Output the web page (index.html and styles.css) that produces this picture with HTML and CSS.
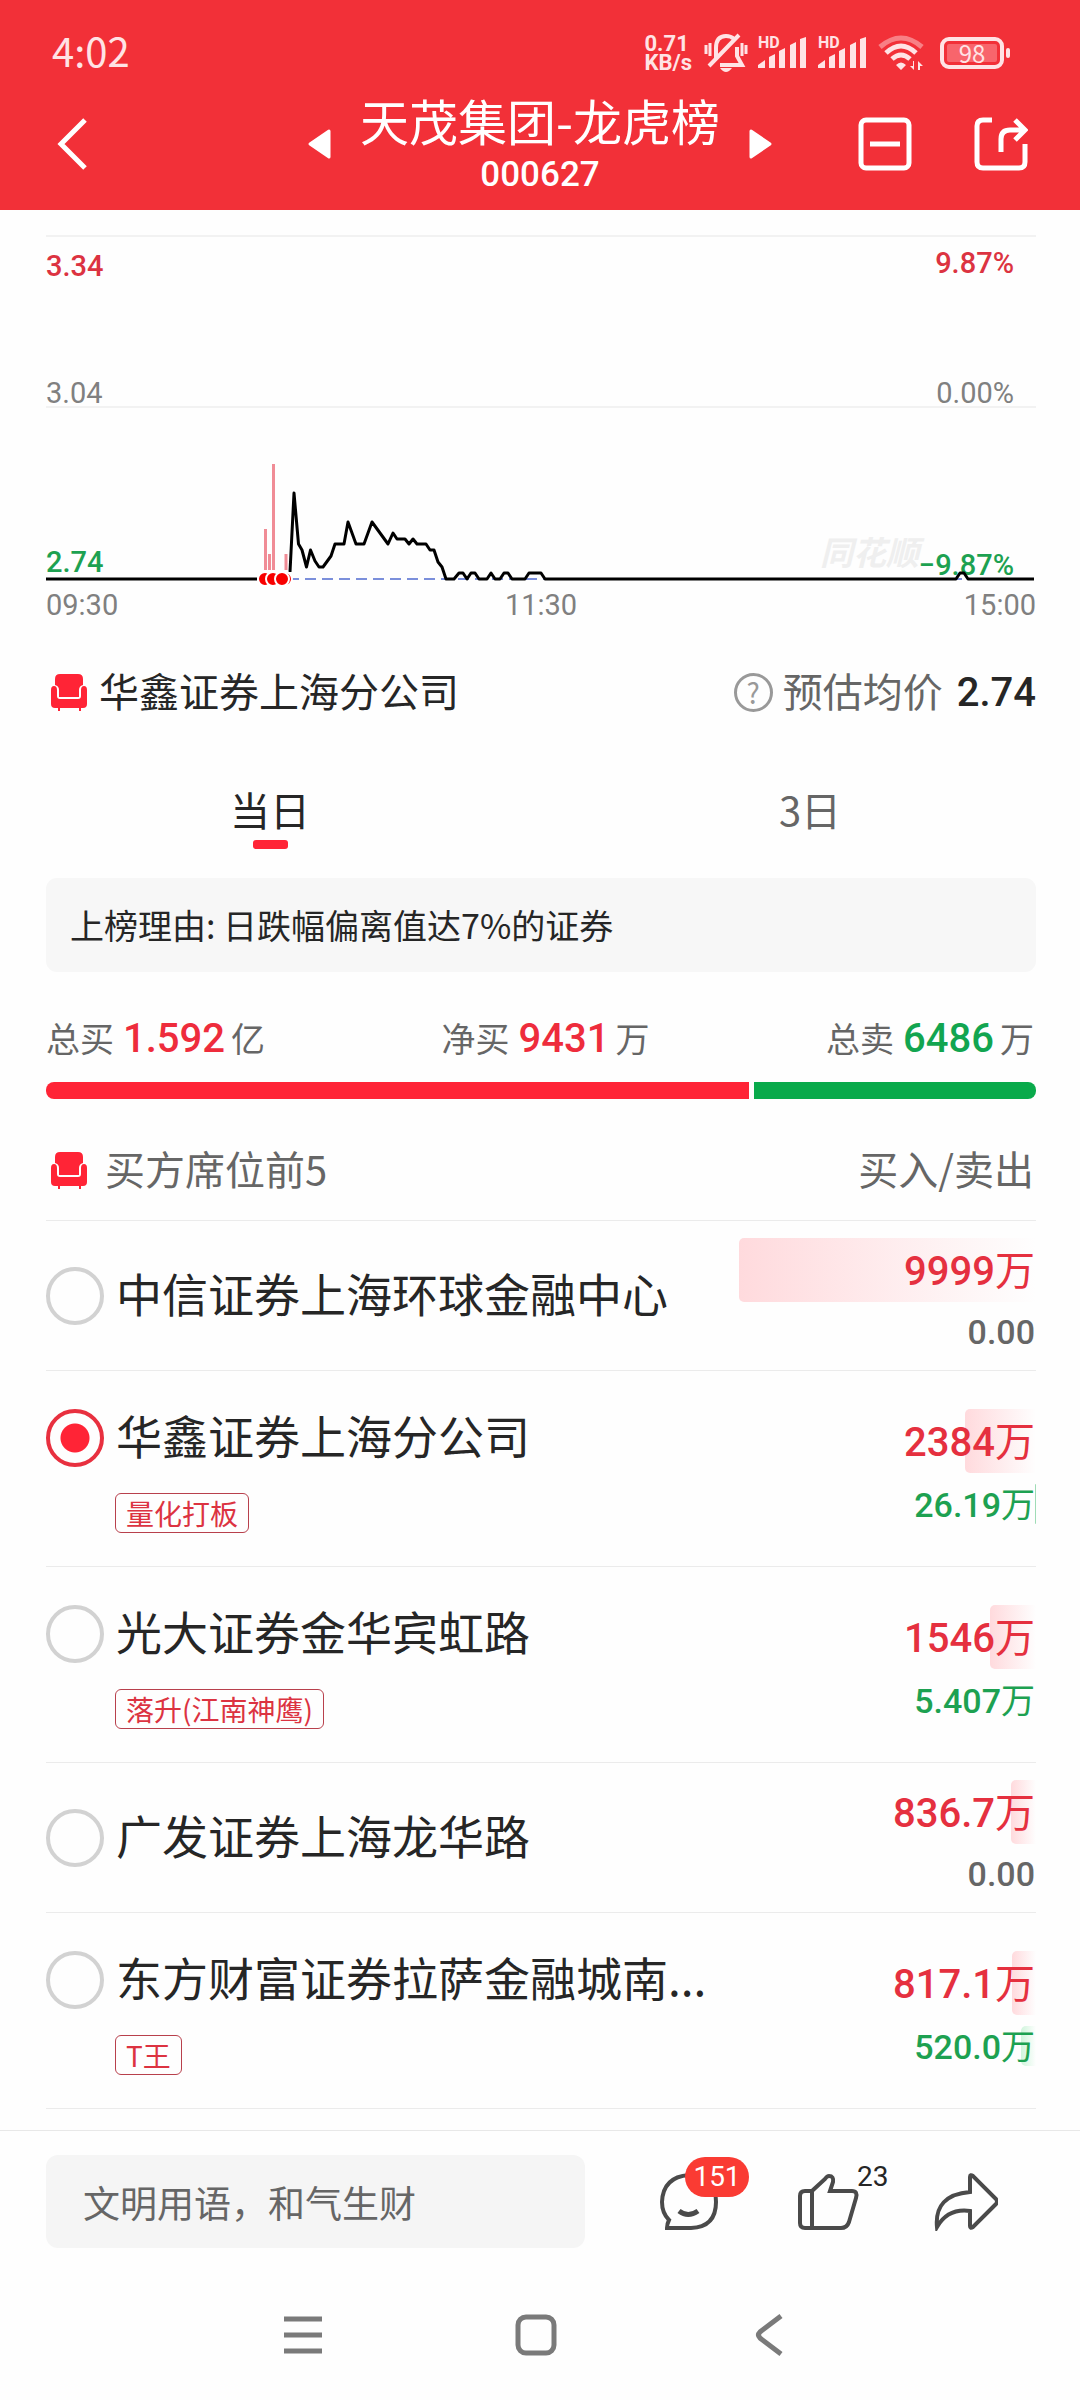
FILE: index.html
```html
<!DOCTYPE html>
<html lang="zh-CN">
<head>
  <meta charset="UTF-8">
  <meta name="viewport" content="width=device-width, initial-scale=1.0">
  <title>天茂集团-龙虎榜</title>
  <link rel="stylesheet" href="styles.css">
</head>
<body>

<!-- shared icons -->
<svg class="sprite" aria-hidden="true">
  <symbol id="icon-seat" viewBox="0 0 36 37">
    <path d="M9 0h18q5 0 5 5v6q-4 1-4 5v7H8v-7q0-4-4-5V5q0-5 5-5z"/>
    <path d="M3 12q3 0 3 4v6q0 3 3 3h18q3 0 3-3v-6q0-4 3-4t3 4v14q0 4-4 4h-2v3h-2v-3H9v3H7v-3H4q-4 0-4-4V16q0-4 3-4z"/>
  </symbol>
  <symbol id="icon-signal" viewBox="0 0 50 32">
    <path d="M0 31v-3l7-5v8zM11 31V20l6-3v14zM21 31V14l6-3v20zM32 31V8l6-3v26zM42 31V2l6-2v31z"/>
  </symbol>
</svg>

<header class="header">
  <div class="status">
    <span class="clock">4:02</span>
    <div class="status-icons">
      <span class="speed">0.71<br>KB/s</span>
      <svg class="bell" viewBox="0 0 44 40">
        <g fill="none" stroke="#ffe3e5" stroke-width="4">
          <path d="M12 25V15q0-12 10-12 5 0 8 3M33 14v9l5 9H16M5 33 35 2"/>
          <path d="M2 12v9M6 10v13M38 10v13M42 12v9" stroke-width="3"/>
        </g>
        <path d="M16 35h12q-6 8-12 0z" fill="#ffe3e5"/>
      </svg>
      <span class="signal"><b>HD</b><svg><use href="#icon-signal"/></svg></span>
      <span class="signal"><b>HD</b><svg><use href="#icon-signal"/></svg></span>
      <svg class="wifi" viewBox="0 0 47 36">
        <g fill="none" stroke="#ffe3e5" stroke-width="5">
          <path d="M2 12q21-18 42 0" opacity=".45"/>
          <path d="M8 18q15-14 30 0M14 24q9-8 18 0"/>
        </g>
        <path d="M18 30q5-5 10 0l-5 5zM36 26v9l-4-4h3v-5zM40 35v-9l5 5h-3v4z" fill="#ffe3e5"/>
      </svg>
      <span class="battery">98</span>
    </div>
  </div>

  <div class="titlebar">
    <button class="icon-btn" aria-label="返回">
      <svg width="40" height="54" viewBox="0 0 40 54"><path d="M33 3 9 27l24 24" fill="none" stroke="#fff" stroke-width="5"/></svg>
    </button>
    <div class="stock">
      <button class="icon-btn" aria-label="上一只">
        <svg width="24" height="30" viewBox="0 0 24 30"><path d="M21 2v26L2 15z" fill="#fff" stroke="#fff" stroke-width="3" stroke-linejoin="round"/></svg>
      </button>
      <div class="stock-name">
        <h1>天茂集团-龙虎榜</h1>
        <p>000627</p>
      </div>
      <button class="icon-btn" aria-label="下一只">
        <svg width="24" height="30" viewBox="0 0 24 30"><path d="M3 2v26l19-13z" fill="#fff" stroke="#fff" stroke-width="3" stroke-linejoin="round"/></svg>
      </button>
    </div>
    <div class="actions">
      <button class="icon-btn" aria-label="移除自选">
        <svg width="54" height="54" viewBox="0 0 54 54"><g fill="none" stroke="#fff" stroke-width="5"><rect x="3" y="3" width="48" height="48" rx="5"/><path d="M12 27h30"/></g></svg>
      </button>
      <button class="icon-btn" aria-label="分享">
        <svg width="54" height="54" viewBox="0 0 54 54"><path d="M18 3H9q-6 0-6 6v36q0 6 6 6h36q6 0 6-6V27M27 35V22q0-9 9-9h13M41 3l10 10-10 10" fill="none" stroke="#fff" stroke-width="5"/></svg>
      </button>
    </div>
  </div>
</header>

<main class="content">
  <svg class="chart" viewBox="0 0 990 410" role="img" aria-label="分时走势">
    <path class="grid" d="M0 16H990M0 187H990"/>
    <text class="watermark" x="774" y="345">同花顺</text>
    <text class="up" x="0" y="56">3.34</text>
    <text x="0" y="183">3.04</text>
    <text class="down" x="0" y="352">2.74</text>
    <text class="up end" x="968" y="53">9.87%</text>
    <text class="end" x="968" y="183">0.00%</text>
    <text class="down end" x="968" y="355">−9.87%</text>
    <path class="cost" d="M242 359H990"/>
    <path class="volume" d="M219.5 309V350M223.5 334V350M227.5 244V350M240 334V350"/>
    <path class="price" d="M0 359H211M244 352L248 273 252.500 324 256 330 260.500 347 264.500 330 269 341 273 347H277L285 336 289 324H298L302 302 310 324H318L326 302 342 324 347 313 351 319H359L363 324 367 319 371 324H380L384 330H388L392 342 396 347 400 359H408L413 353H417L421 359 425 353H429L433 359H441L445 353 449 359H454L458 353H462L466 359H479L483 353H495L499 359H910L914 353H918L922 359H988"/>
    <g class="dots"><circle cx="219" cy="359" r="7"/><circle cx="227" cy="359" r="7"/><circle cx="239" cy="359" r="7"/><circle cx="236" cy="359" r="7"/></g>
    <text x="0" y="395">09:30</text>
    <text class="mid" x="495" y="395">11:30</text>
    <text class="end" x="990" y="395">15:00</text>
  </svg>

  <section class="seat-price">
    <svg class="seat-icon"><use href="#icon-seat"/></svg>
    <h2>华鑫证券上海分公司</h2>
    <button class="help" aria-label="说明">?</button>
    <span class="label">预估均价</span>
    <b class="avg">2.74</b>
  </section>

  <nav class="tabs">
    <button class="tab active">当日</button>
    <button class="tab">3日</button>
  </nav>

  <p class="reason">上榜理由: 日跌幅偏离值达7%的证券</p>

  <div class="totals">
    <span>总买<b class="up">1.592</b>亿</span>
    <span>净买<b class="up">9431</b>万</span>
    <span>总卖<b class="down">6486</b>万</span>
  </div>
  <div class="ratio">
    <i class="ratio-buy" style="width: 71%"></i>
    <i class="ratio-sell"></i>
  </div>

  <div class="list-head">
    <svg class="seat-icon"><use href="#icon-seat"/></svg>
    <h2>买方席位前5</h2>
    <span>买入/卖出</span>
  </div>

  <ul class="seats">
    <li class="seat">
      <div class="seat-main">
        <label><input type="radio" name="seat">中信证券上海环球金融中心</label>
      </div>
      <div class="amounts">
        <p class="buy"><i style="width: 100%"></i><b>9999</b>万</p>
        <p class="sell zero"><b>0.00</b></p>
      </div>
    </li>
    <li class="seat tagged">
      <div class="seat-main">
        <label><input type="radio" name="seat" checked>华鑫证券上海分公司</label>
        <span class="tag">量化打板</span>
      </div>
      <div class="amounts">
        <p class="buy"><i style="width: 23.8%"></i><b>2384</b>万</p>
        <p class="sell"><i class="thin" style="width: 0.3%"></i><b>26.19</b>万</p>
      </div>
    </li>
    <li class="seat tagged">
      <div class="seat-main">
        <label><input type="radio" name="seat">光大证券金华宾虹路</label>
        <span class="tag">落升(江南神鹰)</span>
      </div>
      <div class="amounts">
        <p class="buy"><i style="width: 15.5%"></i><b>1546</b>万</p>
        <p class="sell"><b>5.407</b>万</p>
      </div>
    </li>
    <li class="seat">
      <div class="seat-main">
        <label><input type="radio" name="seat">广发证券上海龙华路</label>
      </div>
      <div class="amounts">
        <p class="buy"><i style="width: 8.4%"></i><b>836.7</b>万</p>
        <p class="sell zero"><b>0.00</b></p>
      </div>
    </li>
    <li class="seat tagged">
      <div class="seat-main">
        <label><input type="radio" name="seat">东方财富证券拉萨金融城南...</label>
        <span class="tag">T王</span>
      </div>
      <div class="amounts">
        <p class="buy"><i style="width: 8.2%"></i><b>817.1</b>万</p>
        <p class="sell"><i style="width: 5.2%"></i><b>520.0</b>万</p>
      </div>
    </li>
  </ul>
</main>

<footer class="comment-bar">
  <input type="text" class="comment" placeholder="文明用语，和气生财" aria-label="评论">
  <div class="tools">
    <button class="tool" aria-label="评论 151">
      <svg viewBox="0 0 64 58"><path d="M9 47Q2 40 2 29 3 4 29 2q27 2 27 27 0 25-25 26H7q0-4 2-8z"/><path d="M19 38q9 7 19 0" stroke-width="5"/></svg>
      <span class="badge">151</span>
    </button>
    <button class="tool" aria-label="点赞 23">
      <svg viewBox="0 0 64 58"><path d="M16 18h-8q-5 0-5 5v27q0 5 5 5h36q6 0 8-6l7-24q2-7-4-7H33l3-9q1-6-4-6-2 0-4 3L15 18v37"/></svg>
      <span class="count">23</span>
    </button>
    <button class="tool" aria-label="转发">
      <svg viewBox="0 0 64 58"><path d="M36 4q0-3 3-1l23 23q2 3 0 5L39 54q-3 2-3-1V38Q14 35 3 54 0 22 36 19z"/></svg>
    </button>
  </div>
</footer>

<nav class="sysnav">
  <button class="icon-btn" aria-label="菜单"><svg width="42" height="42" viewBox="0 0 42 42"><path d="M3 5h38M3 21h38M3 37h38"/></svg></button>
  <button class="icon-btn" aria-label="主页"><svg width="42" height="42" viewBox="0 0 42 42"><rect x="3" y="3" width="36" height="36" rx="8"/></svg></button>
  <button class="icon-btn" aria-label="后退"><svg width="42" height="42" viewBox="0 0 42 42"><path d="M32 2 11 18q-3 3 0 6l21 16"/></svg></button>
</nav>

</body>
</html>
```
FILE: styles.css
```css
* {
  box-sizing: border-box;
}

body {
  margin: 0;
  background: #fefefe;
  color: #262626;
  font-family: "Noto Sans CJK SC", sans-serif;
  font-size: 40px;
}

h1, h2, p, ul {
  margin: 0;
  padding: 0;
  font-weight: 400;
}

button {
  padding: 0;
  border: 0;
  background: none;
  color: inherit;
  font: inherit;
  cursor: pointer;
}

svg {
  display: block;
}

.sprite {
  display: none;
}

.up {
  color: #ee2c3c;
  fill: #dc3341;
}

.down {
  color: #12a550;
  fill: #1da151;
}

/* header */
.header {
  background: #f23038;
  color: #fff;
}

.status {
  display: flex;
  justify-content: space-between;
  align-items: center;
  height: 77px;
  padding: 28px 76px 0 52px;
  color: #ffe3e5;
}

.clock {
  padding-bottom: 4px;
  line-height: 45px;
}

.status-icons {
  display: flex;
  align-items: center;
  gap: 10px;
}

.speed {
  margin-right: 2px;
  font-family: Roboto, sans-serif;
  font-size: 22px;
  font-weight: 700;
  line-height: 19px;
}

.bell {
  width: 44px;
  height: 40px;
}

.signal {
  position: relative;
  width: 50px;
  height: 32px;
}

.signal b {
  position: absolute;
  top: 0;
  left: 0;
  font-family: Roboto, sans-serif;
  font-size: 16px;
  line-height: 12px;
}

.signal svg {
  width: 50px;
  height: 32px;
  fill: #ffe3e5;
}

.wifi {
  width: 47px;
  height: 36px;
}

.battery {
  position: relative;
  width: 64px;
  height: 32px;
  margin-left: 5px;
  border: 4px solid #ffe3e5;
  border-radius: 9px;
  background: #f8656c content-box;
  padding: 3px;
  font-size: 24px;
  line-height: 18px;
  text-align: center;
}

.battery::after {
  content: "";
  position: absolute;
  top: 7px;
  right: -10px;
  width: 4px;
  height: 10px;
  border-radius: 2px;
  background: #ffe3e5;
}

.titlebar {
  display: grid;
  grid-template-columns: 1fr auto 1fr;
  align-items: center;
  height: 133px;
  padding: 0 52px;
}

.titlebar > .icon-btn {
  justify-self: start;
}

.stock {
  display: flex;
  align-items: center;
  gap: 28px;
}

.stock-name {
  text-align: center;
}

.stock-name h1 {
  font-size: 49px;
  line-height: 62px;
}

.stock-name p {
  font-family: Roboto, sans-serif;
  font-size: 35px;
  font-weight: 500;
  line-height: 48px;
}

.actions {
  display: flex;
  justify-content: flex-end;
  gap: 62px;
}

/* chart */
.content {
  padding: 10px 44px 21px 46px;
}

.chart {
  width: 100%;
  fill: #808080;
  font-family: Roboto, sans-serif;
  font-size: 29px;
}

.chart .mid {
  text-anchor: middle;
}

.chart .end {
  text-anchor: end;
}

.chart .up, .chart .down {
  font-weight: 500;
}

.chart .watermark {
  fill: #efefef;
  font-family: "Noto Sans CJK SC", sans-serif;
  font-size: 33px;
  font-style: italic;
  font-weight: 700;
}

.grid, .cost, .volume, .price {
  fill: none;
}

.grid {
  stroke: #f2f2f2;
  stroke-width: 2;
}

.cost {
  stroke: #7b8fdb;
  stroke-width: 2;
  stroke-dasharray: 11 6;
}

.volume {
  stroke: #f08c96;
  stroke-width: 3;
}

.price {
  stroke: #000;
  stroke-width: 3;
  stroke-linejoin: round;
}

.dots {
  fill: #f80000;
  stroke: #fff;
  stroke-width: 2;
}

/* selected seat */
.seat-price {
  display: flex;
  align-items: center;
  height: 60px;
  margin-top: 32px;
}

.seat-icon {
  width: 36px;
  height: 37px;
  margin-left: 5px;
  fill: #ff2436;
}

.seat-price h2, .label, .list-head h2, .list-head span {
  padding-bottom: 4px;
  font-size: 40px;
}

.seat-price h2 {
  margin: 0 auto 0 12px;
}

.help {
  width: 39px;
  height: 39px;
  border: 3px solid #999;
  border-radius: 50%;
  color: #999;
  font-size: 28px;
  line-height: 32px;
}

.label {
  margin: 0 14px 0 10px;
  color: #666;
}

.avg {
  font-family: Roboto, sans-serif;
  font-weight: 500;
}

.tabs {
  display: flex;
  margin: 64px -44px 0 -46px;
}

.tab {
  flex: 1;
  align-self: flex-start;
  color: #666;
  line-height: 46px;
}

.tab.active {
  color: #262626;
}

.tab.active::after {
  content: "";
  display: block;
  width: 35px;
  height: 9px;
  margin: 8px auto 0;
  border-radius: 3px;
  background: #ff2436;
}

.reason {
  margin-top: 29px;
  padding: 0 24px;
  border-radius: 11px;
  background: #f7f7f7;
  font-size: 34px;
  line-height: 94px;
}

/* totals */
.totals {
  display: flex;
  justify-content: space-between;
  height: 48px;
  margin-top: 42px;
  padding-right: 2px;
  color: #666;
  font-size: 34px;
  line-height: 48px;
}

.totals b {
  margin: 0 6px 0 9px;
  font-family: Roboto, sans-serif;
  font-size: 40px;
  font-weight: 500;
}

.ratio {
  display: flex;
  gap: 5px;
  height: 17px;
  margin-top: 20px;
}

.ratio-buy {
  border-radius: 8px 0 0 8px;
  background: #ff2436;
}

.ratio-sell {
  flex: 1;
  border-radius: 0 8px 8px 0;
  background: #09aa4b;
}

/* seat list */
.list-head {
  display: flex;
  align-items: center;
  height: 101px;
  margin-top: 21px;
  padding-right: 2px;
  border-bottom: 1px solid #ebebeb;
  color: #666;
}

.list-head h2 {
  margin: 0 auto 0 18px;
}

.seats {
  list-style: none;
}

.seat {
  display: flex;
  align-items: center;
  padding: 17px 0;
  border-bottom: 1px solid #ebebeb;
}

.seat.tagged {
  align-items: flex-start;
  padding: 38px 0 33px;
}

.seat-main {
  flex: 1;
}

.seat label {
  display: flex;
  align-items: flex-start;
  gap: 12px;
  font-size: 46px;
  line-height: 50px;
  white-space: nowrap;
}

.seat input {
  appearance: none;
  width: 58px;
  height: 58px;
  margin: 0;
  border: 4px solid #d2d2d2;
  border-radius: 50%;
}

.seat input:checked {
  border-color: #e8303f;
  background: radial-gradient(#ff2436 14px, transparent 15px);
}

.tag {
  display: block;
  width: fit-content;
  margin: 26px 0 0 69px;
  padding: 0 10px;
  border: 1px solid #b8404c;
  border-radius: 6px;
  color: #dc3341;
  font-size: 28px;
  line-height: 38px;
}

.amounts {
  width: 30%;
}

.amounts p {
  display: flex;
  justify-content: flex-end;
  align-items: baseline;
  position: relative;
  z-index: 0;
  padding-right: 1px;
}

.amounts b {
  font-family: Roboto, sans-serif;
  font-weight: 500;
}

.amounts i {
  position: absolute;
  z-index: -1;
  top: 0;
  right: 0;
  height: 100%;
  border-radius: 5px 0 0 5px;
}

.buy {
  height: 64px;
  color: #e5303f;
  font-size: 40px;
  line-height: 60px;
}

.buy i {
  background: linear-gradient(90deg, #ffdadd, #fefefe);
}

.sell {
  height: 40px;
  margin-top: 11px;
  color: #1da151;
  font-size: 34px;
  line-height: 38px;
}

.sell i {
  background: linear-gradient(90deg, #d0f5dc, #fefefe);
}

.sell .thin {
  background: #9fdcb6;
}

.sell.zero {
  color: #666;
}

/* comment bar */
.comment-bar {
  display: flex;
  align-items: center;
  padding: 24px 82px 22px 46px;
  border-top: 1px solid #e8e8e8;
}

.comment {
  flex: 1;
  min-width: 0;
  height: 93px;
  margin-right: 75px;
  padding: 0 37px;
  border: 0;
  border-radius: 12px;
  background: #f5f5f5;
  font-family: inherit;
  font-size: 37px;
}

.comment::placeholder {
  color: #666;
}

.tools {
  display: flex;
  gap: 73px;
}

.tool {
  position: relative;
}

.tool svg {
  width: 64px;
  height: 58px;
  fill: none;
  stroke: #4a4a4a;
  stroke-width: 4;
}

.badge, .count {
  position: absolute;
  top: -16px;
  font-family: Roboto, sans-serif;
  font-size: 28px;
  line-height: 40px;
}

.badge {
  left: 25px;
  width: 64px;
  border-radius: 20px;
  background: #fa3b33;
  color: #fff;
}

.count {
  left: 60px;
}

/* system navigation */
.sysnav {
  display: flex;
  justify-content: center;
  gap: 192px;
  height: 130px;
  padding-right: 8px;
}

.sysnav svg {
  fill: none;
  stroke: #7a7a7a;
  stroke-width: 5;
}
```
